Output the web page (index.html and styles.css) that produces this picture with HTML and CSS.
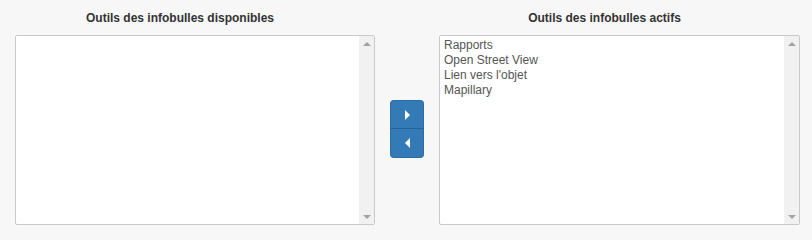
FILE: index.html
```html
<!DOCTYPE html>
<html lang="fr">
<head>
<meta charset="utf-8">
<title>Outils des infobulles</title>
<link rel="stylesheet" href="styles.css">
</head>
<body>
<div class="layout">
  <div class="title">Outils des infobulles disponibles</div>
  <div class="spacer"></div>
  <div class="title">Outils des infobulles actifs</div>

  <div class="listbox">
    <ul class="items"></ul>
    <div class="scrollbar">
      <span class="arrow up"></span>
      <span class="arrow down"></span>
    </div>
  </div>

  <div class="buttons">
    <button class="btn btn-top" type="button" aria-label="Ajouter">
      <svg width="5" height="10" viewBox="0 0 5 10"><path d="M0 0 L5 5 L0 10 Z" fill="#fff"/></svg>
    </button>
    <button class="btn btn-bottom" type="button" aria-label="Retirer">
      <svg width="5" height="10" viewBox="0 0 5 10"><path d="M5 0 L0 5 L5 10 Z" fill="#fff"/></svg>
    </button>
  </div>

  <div class="listbox">
    <ul class="items">
      <li>Rapports</li>
      <li>Open Street View</li>
      <li>Lien vers l'objet</li>
      <li>Mapillary</li>
    </ul>
    <div class="scrollbar">
      <span class="arrow up"></span>
      <span class="arrow down"></span>
    </div>
  </div>
</div>
</body>
</html>
```

FILE: styles.css
```css
html, body {
  margin: 0;
  padding: 0;
  background: #f7f7f7;
  font-family: "Liberation Sans", Arial, sans-serif;
  font-size: 12px;
}

.layout {
  display: grid;
  grid-template-columns: 360px 34px 361px;
  grid-template-rows: auto 190px;
  column-gap: 15px;
  padding: 10px 0 0 15px;
}

.title {
  font-weight: bold;
  color: #333;
  text-align: center;
  line-height: 17px;
  margin: 0 15px 8px -15px;
}

.listbox {
  display: flex;
  background: #fff;
  border: 1px solid #c9c9c9;
  border-radius: 2px;
  box-sizing: border-box;
  height: 190px;
  overflow: hidden;
}

.items {
  flex: 1;
  list-style: none;
  margin: 0;
  padding: 2px 4px;
  color: #555;
  line-height: 15px;
}

.scrollbar {
  width: 15px;
  background: #f1f1f1;
  display: flex;
  flex-direction: column;
  justify-content: space-between;
  align-items: center;
  padding: 6px 0 5px;
}

.arrow {
  width: 0;
  height: 0;
  border-left: 4px solid transparent;
  border-right: 4px solid transparent;
}

.arrow.up {
  border-bottom: 4px solid #a3a3a3;
}

.arrow.down {
  border-top: 4px solid #a3a3a3;
}

.buttons {
  align-self: center;
  display: flex;
  flex-direction: column;
  margin-bottom: 2px;
}

.btn {
  width: 34px;
  height: 29px;
  margin: 0;
  padding: 0 0 0 1px;
  background: #337ab7;
  border: 1px solid #2e6da4;
  display: flex;
  align-items: center;
  justify-content: center;
  cursor: pointer;
}

.btn-top {
  border-radius: 4px 4px 0 0;
  border-bottom-color: #28609a;
}

.btn-bottom {
  border-radius: 0 0 4px 4px;
  border-top: none;
}
```
